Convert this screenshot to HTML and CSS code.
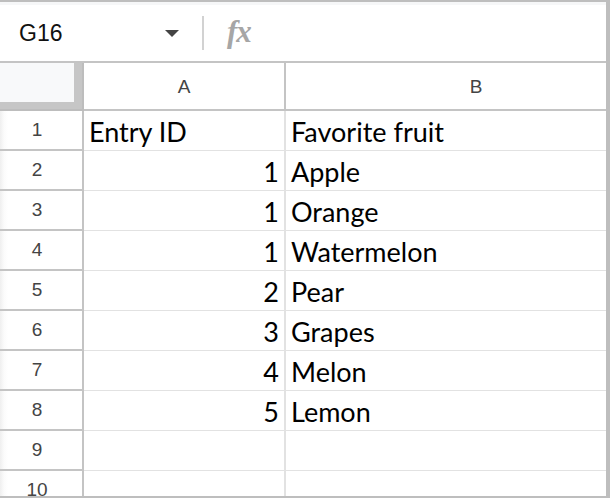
FILE: index.html
```html
<!DOCTYPE html>
<html lang="en">

<head>
    <meta charset="UTF-8">
    <meta name="viewport" content="width=device-width, initial-scale=1.0">
    <title>Sheet</title>
    <link rel="stylesheet" href="styles.css">
</head>

<body>
    <div class="sheet">
        <!-- 名称框 + 公式栏 -->
        <div class="formula-bar">
            <div class="name-box">
                <span class="name">G16</span>
                <span class="caret"></span>
            </div>
            <div class="divider"></div>
            <div class="fx">fx</div>
        </div>

        <!-- 表格 -->
        <div class="grid">
            <div class="corner"><div class="corner-inner"></div></div>
            <div class="col-head">A</div>
            <div class="col-head">B</div>

            <div class="row-head">1</div>
            <div class="cell">Entry ID</div>
            <div class="cell">Favorite fruit</div>

            <div class="row-head">2</div>
            <div class="cell num">1</div>
            <div class="cell">Apple</div>

            <div class="row-head">3</div>
            <div class="cell num">1</div>
            <div class="cell">Orange</div>

            <div class="row-head">4</div>
            <div class="cell num">1</div>
            <div class="cell">Watermelon</div>

            <div class="row-head">5</div>
            <div class="cell num">2</div>
            <div class="cell">Pear</div>

            <div class="row-head">6</div>
            <div class="cell num">3</div>
            <div class="cell">Grapes</div>

            <div class="row-head">7</div>
            <div class="cell num">4</div>
            <div class="cell">Melon</div>

            <div class="row-head">8</div>
            <div class="cell num">5</div>
            <div class="cell">Lemon</div>

            <div class="row-head">9</div>
            <div class="cell"></div>
            <div class="cell"></div>

            <div class="row-head">10</div>
            <div class="cell"></div>
            <div class="cell"></div>
        </div>
    </div>
</body>

</html>
```

FILE: styles.css
```css
*,
*:after {
    box-sizing: border-box;
}

html,
body {
    margin: 0;
    padding: 0;
    background: #fff;
}

.sheet {
    width: 610px;
    height: 498px;
    overflow: hidden;
    border-top: 2px solid #bebebe;
    border-right: 4px solid #bebebe;
    border-bottom: 2px solid #bebebe;
    font-family: "Liberation Sans", Arial, sans-serif;
    display: flex;
    flex-direction: column;
}

/* 公式栏 */

.formula-bar {
    height: 61px;
    flex: none;
    display: flex;
    align-items: center;
    border-top: 3px solid #f6f7f8;
    border-bottom: 2px solid #c4c4c4;
}

.name-box {
    width: 202px;
    display: flex;
    align-items: center;
    padding-left: 19px;
    padding-right: 23px;
}

.name {
    flex: 1;
    font-size: 23px;
    color: #111;
}

.caret {
    width: 0;
    height: 0;
    border-left: 7px solid transparent;
    border-right: 7px solid transparent;
    border-top: 7px solid #444;
}

.divider {
    width: 2px;
    height: 34px;
    background: #d2d2d2;
}

.fx {
    margin-left: 23px;
    font-family: "Liberation Serif", serif;
    font-style: italic;
    font-weight: bold;
    font-size: 31px;
    letter-spacing: -1px;
    color: #a6a6a6;
    margin-top: -2px;
}

/* 表格 */

.grid {
    flex: 1;
    display: grid;
    grid-template-columns: 84px 202px 382px;
    grid-template-rows: 48px repeat(10, 40px);
}

.corner {
    background: #c6c6c6;
    padding: 0 8px 7px 0;
    border-right: 2px solid #bdbdbd;
    border-bottom: 2px solid #bdbdbd;
}

.corner-inner {
    height: 100%;
    background: #f8f9fa;
}

.col-head {
    display: flex;
    align-items: center;
    justify-content: center;
    font-size: 19px;
    color: #444;
    border-right: 2px solid #c4c4c4;
    border-bottom: 2px solid #c4c4c4;
    padding-top: 2px;
}

.row-head {
    display: flex;
    align-items: center;
    justify-content: center;
    font-size: 19px;
    color: #444;
    background: linear-gradient(to right, #efefef, #fbfbfb 4px, #fff 8px);
    border-right: 2px solid #c4c4c4;
    border-bottom: 2px solid #c4c4c4;
    padding: 0 8px 1px 0;
}

.cell {
    display: flex;
    align-items: flex-end;
    font-family: Lato, "Open Sans", sans-serif;
    font-size: 27px;
    color: #000;
    padding: 0 5px 2px 5px;
    line-height: 1.2;
    border-right: 2px solid #e2e2e2;
    border-bottom: 1px solid #e2e2e2;
}

.cell.num {
    justify-content: flex-end;
}
```
